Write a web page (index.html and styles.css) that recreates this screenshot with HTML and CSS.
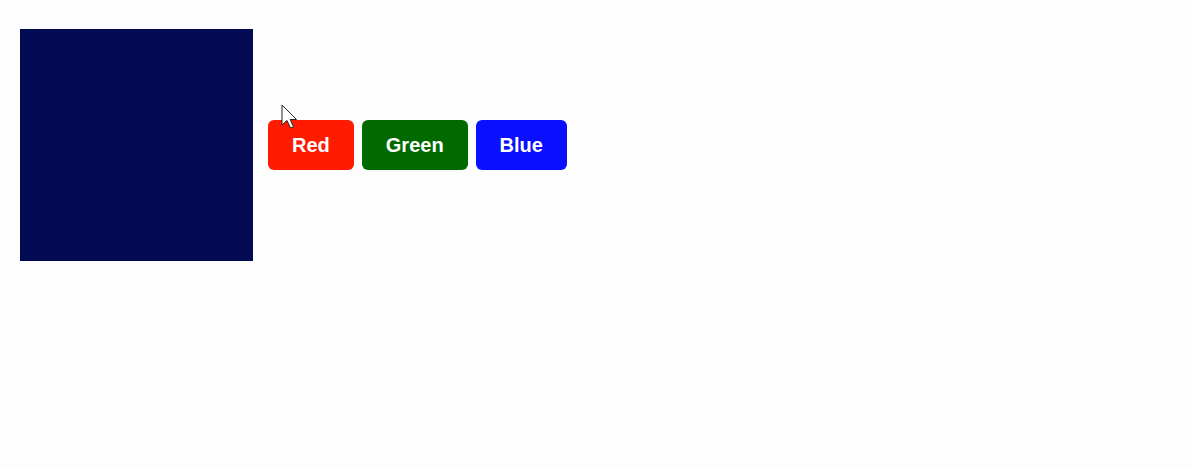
FILE: index.html
```html
<!DOCTYPE html>
<html>
<head>
<meta charset="utf-8">
<link rel="stylesheet" href="styles.css">
</head>
<body>
<div class="stage">
  <div class="swatch"></div>
  <div class="buttons">
    <button class="btn btn-red">Red</button>
    <button class="btn btn-green">Green</button>
    <button class="btn btn-blue">Blue</button>
  </div>
  <svg class="cursor" width="17" height="26" viewBox="0 0 17 26">
    <path d="M1 1 L1 21 L6 16.5 L9.5 24 L12.5 22.8 L9.2 15.5 L15.5 15.5 Z" fill="#fff" stroke="#222" stroke-width="1" stroke-linejoin="round"/>
  </svg>
</div>
</body>
</html>
```
FILE: styles.css
```css
html, body {
  margin: 0;
  background: #fdfdfd;
}
.stage {
  position: relative;
  display: flex;
  align-items: center;
  gap: 15px;
  padding: 29px 20px;
  font-family: "Liberation Sans", Arial, sans-serif;
}
.swatch {
  width: 233px;
  height: 232px;
  background: #030a54;
}
.buttons {
  display: flex;
  gap: 8px;
}
.btn {
  height: 50px;
  padding: 0 24px;
  border: none;
  border-radius: 6px;
  color: #fff;
  font-family: "Liberation Sans", Arial, sans-serif;
  font-weight: bold;
  font-size: 20px;
  cursor: pointer;
}
.btn-red { background: #ff1a00; }
.btn-green { background: #006a00; }
.btn-blue { background: #0a10ff; }
.cursor {
  position: absolute;
  left: 281px;
  top: 104px;
}
```
